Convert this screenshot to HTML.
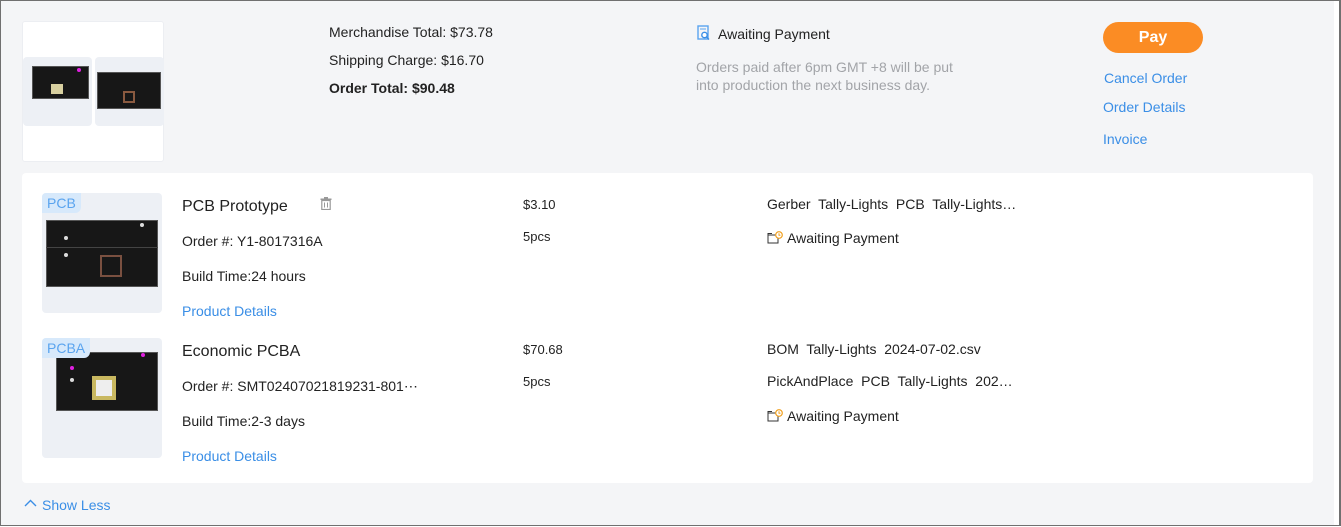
<!DOCTYPE html>
<html><head><meta charset="utf-8"><style>
*{box-sizing:border-box;margin:0;padding:0}
body{width:1341px;height:527px;background:#fff;font-family:"Liberation Sans",sans-serif;color:#222;position:relative;overflow:hidden}
.frame{position:absolute;left:0;top:0;width:1341px;height:526px;border:1px solid #707070;border-right-width:2px;background:#f4f5f7}
.strip{position:absolute;left:1334px;top:1px;width:5px;height:524px;background:#fff}
.a{position:absolute;white-space:nowrap;font-size:14px}
.link{color:#3a8ee6}
.gray{color:#a2a4a8}
.thumbbox{position:absolute;left:22px;top:21px;width:142px;height:141px;background:#fff;border:1px solid #eceef2;border-radius:3px}
.tile{position:absolute;background:#edf0f5;border-radius:4px}
.pcb{position:absolute;background:#171717;border:1px solid #555}
.panel{position:absolute;left:22px;top:173px;width:1291px;height:310px;background:#fff;border-radius:4px}
.tag{position:absolute;left:0;top:0;background:#d7e9fb;color:#5aa4ef;font-size:14px;padding:2px 5px;border-radius:4px 0 6px 0}
.pay{position:absolute;left:1103px;top:22px;width:100px;height:31px;border-radius:16px;background:#fb8c24;color:#fff;font-weight:bold;font-size:16px;text-align:center;line-height:31px}
.dot{position:absolute;width:4px;height:4px;border-radius:2px;background:#ddd}
.mg{position:absolute;width:4px;height:4px;border-radius:2px;background:#e020e0}
</style></head><body>
<div class="frame"></div><div class="strip"></div>

<div class="thumbbox">
 <div class="tile" style="left:0;top:35px;width:69px;height:69px"><div class="pcb" style="left:9px;top:9px;width:57px;height:33px"></div><div style="position:absolute;left:28px;top:27px;width:12px;height:10px;background:#d8d0a0"></div><div class="mg" style="left:54px;top:11px"></div></div>
 <div class="tile" style="left:72px;top:35px;width:69px;height:69px"><div class="pcb" style="left:2px;top:15px;width:64px;height:37px"></div><div style="position:absolute;left:28px;top:34px;width:12px;height:12px;border:2px solid #8a5a40"></div></div>
</div>

<div class="a" style="left:329px;top:24px">Merchandise Total: $73.78</div>
<div class="a" style="left:329px;top:52px">Shipping Charge: $16.70</div>
<div class="a" style="left:329px;top:80px;font-weight:bold">Order Total: $90.48</div>

<svg style="position:absolute;left:697px;top:25px" width="14" height="16" viewBox="0 0 14 16"><rect x="1" y="1" width="10" height="13" fill="none" stroke="#5aa4ef" stroke-width="1.4"/><line x1="3" y1="4" x2="9" y2="4" stroke="#5aa4ef"/><circle cx="7.5" cy="10" r="2.7" fill="#fff" stroke="#3a8ee6" stroke-width="1.4"/><line x1="9.5" y1="12" x2="12" y2="14.5" stroke="#3a8ee6" stroke-width="1.4"/></svg>
<div class="a" style="left:718px;top:26px">Awaiting Payment</div>
<div class="a gray" style="left:696px;top:58px;line-height:18px">Orders paid after 6pm GMT +8 will be put<br>into production the next business day.</div>

<div class="pay">Pay</div>
<div class="a link" style="left:1104px;top:70px">Cancel Order</div>
<div class="a link" style="left:1103px;top:99px">Order Details</div>
<div class="a link" style="left:1103px;top:131px">Invoice</div>

<div class="panel">
 <div class="tile" style="left:20px;top:20px;width:120px;height:120px">
  <div class="pcb" style="left:4px;top:27px;width:112px;height:67px"></div>
  <div style="position:absolute;left:4px;top:54px;width:112px;height:1px;background:#444"></div>
  <div style="position:absolute;left:58px;top:62px;width:22px;height:22px;border:2px solid #7a5040"></div>
  <div class="dot" style="left:98px;top:30px"></div><div class="dot" style="left:22px;top:43px"></div><div class="dot" style="left:22px;top:60px"></div>
  <div class="tag">PCB</div>
 </div>
 <div class="tile" style="left:20px;top:165px;width:120px;height:120px">
  <div class="pcb" style="left:14px;top:14px;width:102px;height:59px"></div>
  <div style="position:absolute;left:50px;top:38px;width:24px;height:24px;background:#c9b860"></div>
  <div style="position:absolute;left:54px;top:42px;width:16px;height:16px;background:#eee"></div>
  <div class="mg" style="left:99px;top:15px"></div><div class="mg" style="left:28px;top:28px"></div><div class="dot" style="left:28px;top:40px"></div>
  <div class="tag">PCBA</div>
 </div>

 <div class="a" style="left:160px;top:25px;font-size:16px">PCB Prototype</div>
 <svg style="position:absolute;left:298px;top:24px" width="12" height="13" viewBox="0 0 12 13"><rect x="0.5" y="1.5" width="11" height="1.5" fill="#999"/><rect x="4" y="0" width="4" height="2" fill="#999"/><rect x="1.8" y="3.5" width="8.4" height="9" fill="none" stroke="#999" stroke-width="1.2"/><line x1="4.5" y1="5.5" x2="4.5" y2="10.5" stroke="#999"/><line x1="7.5" y1="5.5" x2="7.5" y2="10.5" stroke="#999"/></svg>
 <div class="a" style="left:160px;top:60px">Order #: Y1-8017316A</div>
 <div class="a" style="left:160px;top:95px">Build Time:24 hours</div>
 <div class="a link" style="left:160px;top:130px">Product Details</div>

 <div class="a" style="left:160px;top:170px;font-size:16px">Economic PCBA</div>
 <div class="a" style="left:160px;top:205px">Order #: SMT02407021819231-801⋯</div>
 <div class="a" style="left:160px;top:240px">Build Time:2-3 days</div>
 <div class="a link" style="left:160px;top:275px">Product Details</div>

 <div class="a" style="left:501px;top:24px;font-size:13px">$3.10</div>
 <div class="a" style="left:501px;top:56px;font-size:13px">5pcs</div>
 <div class="a" style="left:501px;top:169px;font-size:13px">$70.68</div>
 <div class="a" style="left:501px;top:201px;font-size:13px">5pcs</div>

 <div class="a" style="left:745px;top:23px">Gerber&nbsp; Tally-Lights&nbsp; PCB&nbsp; Tally-Lights…</div>
 <svg style="position:absolute;left:745px;top:58px" width="16" height="13" viewBox="0 0 16 13"><path d="M1 4h10v8H1z M1 4V2.5h4" fill="none" stroke="#333" stroke-width="1"/><circle cx="12" cy="4" r="3.3" fill="#fff" stroke="#f0a020" stroke-width="1.2"/><path d="M12 2.3v1.9h1.4" fill="none" stroke="#f0a020"/></svg>
 <div class="a" style="left:765px;top:57px">Awaiting Payment</div>
 <div class="a" style="left:745px;top:168px">BOM&nbsp; Tally-Lights&nbsp; 2024-07-02.csv</div>
 <div class="a" style="left:745px;top:200px">PickAndPlace&nbsp; PCB&nbsp; Tally-Lights&nbsp; 202…</div>
 <svg style="position:absolute;left:745px;top:236px" width="16" height="13" viewBox="0 0 16 13"><path d="M1 4h10v8H1z M1 4V2.5h4" fill="none" stroke="#333" stroke-width="1"/><circle cx="12" cy="4" r="3.3" fill="#fff" stroke="#f0a020" stroke-width="1.2"/><path d="M12 2.3v1.9h1.4" fill="none" stroke="#f0a020"/></svg>
 <div class="a" style="left:765px;top:235px">Awaiting Payment</div>
</div>

<svg style="position:absolute;left:24px;top:499px" width="13" height="8" viewBox="0 0 13 8"><path d="M1 7L6.5 1.5L12 7" fill="none" stroke="#3a8ee6" stroke-width="1.4"/></svg>
<div class="a link" style="left:42px;top:497px">Show Less</div>
</body></html>
